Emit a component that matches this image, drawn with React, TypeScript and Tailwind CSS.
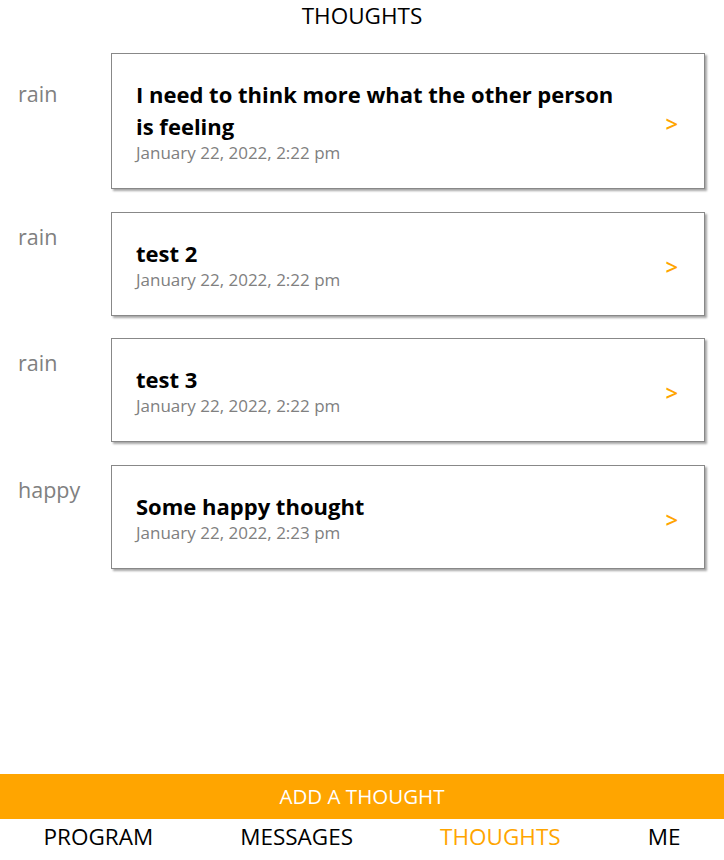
const thoughts = [
  { mood: "rain", title: "I need to think more what the other person is feeling", date: "January 22, 2022, 2:22 pm" },
  { mood: "rain", title: "test 2", date: "January 22, 2022, 2:22 pm" },
  { mood: "rain", title: "test 3", date: "January 22, 2022, 2:22 pm" },
  { mood: "happy", title: "Some happy thought", date: "January 22, 2022, 2:23 pm" },
];

export default function App() {
  return (
    <div className="h-screen flex flex-col bg-white font-['Open_Sans',sans-serif]">
      <header className="h-[33px] flex items-center justify-center text-[22.5px] text-black leading-none">
        THOUGHTS
      </header>

      <main className="flex-1 flex flex-col gap-[22.5px] pt-5 pl-[18px] pr-[19px]">
        {thoughts.map((t, i) => (
          <div key={i} className="flex items-center">
            <div className="w-[93px] shrink-0 text-[21.5px] leading-7 mb-[54px] text-[#808080]">{t.mood}</div>
            <div className="flex-1 flex items-center border border-[#888] shadow-[2px_2px_2px_rgba(0,0,0,0.35)] pl-6 pr-[26px] py-6">
              <div className="flex-1 pr-10">
                <div className="text-[22px] font-bold leading-8 text-black max-w-[495px]">{t.title}</div>
                <div className="text-[17px] leading-[22px] text-[#808080]">{t.date}</div>
              </div>
              <div className="text-[22px] leading-none font-semibold mt-1 text-[#ffa500]">&gt;</div>
            </div>
          </div>
        ))}
      </main>

      <button className="h-[45px] w-full bg-[#ffa500] text-white text-[20.5px] flex items-center justify-center">
        ADD A THOUGHT
      </button>
      <nav className="h-[41px] flex items-center justify-around text-[22.5px] leading-none pb-1 text-black">
        <span>PROGRAM</span>
        <span>MESSAGES</span>
        <span className="text-[#ffa500]">THOUGHTS</span>
        <span>ME</span>
      </nav>
    </div>
  );
}
